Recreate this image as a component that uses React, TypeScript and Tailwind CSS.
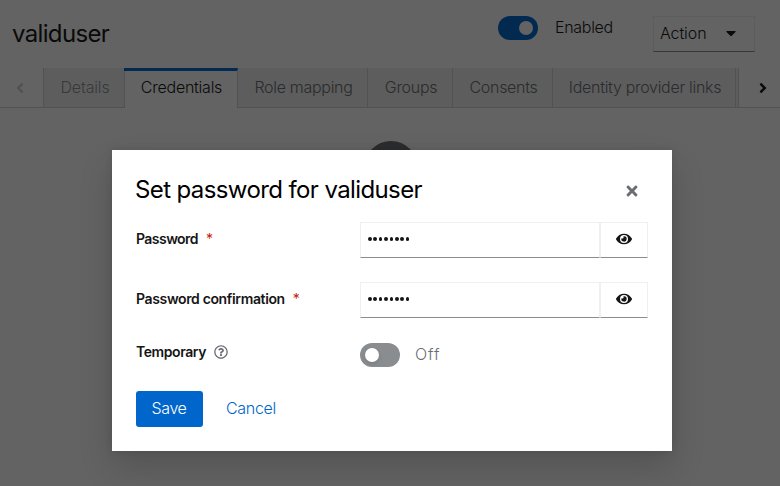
import React from 'react';
import { FaAngleLeft, FaAngleRight, FaCaretDown, FaEye, FaRegQuestionCircle, FaTimes } from 'react-icons/fa';

type Tab = { label: string; box: string; text: string; active?: boolean };

const tabs: Tab[] = [
  { label: 'Details', box: 'w-[81px]', text: 'tracking-[-0.15px] text-[#6a6e73]/75' },
  { label: 'Credentials', box: '-ml-px w-[114px]', text: 'tracking-[-0.25px] text-[#151515]', active: true },
  { label: 'Role mapping', box: 'w-[130px]', text: 'tracking-[-0.3px] text-[#6a6e73]' },
  { label: 'Groups', box: 'w-[85px]', text: 'tracking-[-0.3px] text-[#6a6e73]' },
  { label: 'Consents', box: 'w-[100px]', text: 'tracking-[-0.3px] text-[#6a6e73]' },
  { label: 'Identity provider links', box: 'w-[183px]', text: 'tracking-[-0.3px] text-[#6a6e73]' },
];

function TabItem({ label, box, text, active }: Tab) {
  return (
    <div
      className={`${box} flex h-10 shrink-0 items-center justify-center whitespace-nowrap border-r border-r-[#d2d2d2] pl-[2px] ${
        active ? 'border-t-[3px] border-t-[#0066cc] pb-[5px]' : 'border-b border-b-[#d2d2d2] bg-[#f0f0f0] pb-px'
      }`}
    >
      <span className={text}>{label}</span>
    </div>
  );
}

function Page() {
  return (
    <div className="h-[486px] w-[780px] overflow-hidden bg-white">
      <header className="flex h-[68px] items-start pl-3">
        <h1 className="w-[486px] pt-[17px] text-[24px] font-normal leading-[34px] tracking-[-0.65px]">validuser</h1>
        <div className="mt-4 flex h-6 w-10 justify-end rounded-full bg-[#0066cc] p-[5px]">
          <div className="size-[14px] rounded-full bg-white" />
        </div>
        <span className="ml-[17px] mt-[15px] w-[98px] leading-6 tracking-[-0.3px]">Enabled</span>
        <div className="mt-4 flex h-9 w-[102px] items-center border border-[#f0f0f0] border-b-[#8a8d90] pb-[2px] pl-[6px]">
          <span className="w-[63px] tracking-[-0.1px]">Action</span>
          <FaCaretDown className="size-4" />
        </div>
      </header>
      <nav className="flex h-10">
        <div className="flex w-11 shrink-0 items-center justify-center border-b border-r border-[#d2d2d2] pr-[3px]">
          <FaAngleLeft className="size-4 text-[#d2d2d2]" />
        </div>
        {tabs.map((tab) => (
          <TabItem key={tab.label} {...tab} />
        ))}
        <div className="w-[2px] shrink-0 border-b border-[#d2d2d2] bg-[#f0f0f0]" />
        <div className="flex flex-1 items-center justify-center border-b border-l border-[#d2d2d2] pl-[6px]">
          <FaAngleRight className="size-4" />
        </div>
      </nav>
      <div className="ml-[364px] mt-[33px] size-[54px] rounded-full bg-[#6a6e73]" />
    </div>
  );
}

function PasswordRow({ label, tracking }: { label: string; tracking: string }) {
  return (
    <div className="mb-6 flex h-9">
      <div className="flex w-[224px] pt-[6px] text-[14px] font-semibold leading-[21px]">
        <span className={tracking}>{label}</span>
        <span className="ml-2 font-normal text-[#c9190b]">*</span>
      </div>
      <div className="flex h-9 w-[240px] items-center gap-[1.7px] border border-[#f0f0f0] border-b-[#8a8d90] pb-[2px] pl-[7px]">
        {Array.from({ length: 8 }, (_, i) => (
          <i key={i} className="size-[3.7px] rounded-full bg-[#151515]" />
        ))}
      </div>
      <div className="flex h-9 w-12 items-center justify-center border border-[#f0f0f0] border-b-[#8a8d90] pb-[2px]">
        <FaEye className="size-4" />
      </div>
    </div>
  );
}

function PasswordDialog() {
  return (
    <section className="h-[301px] w-[560px] bg-white px-6 pt-6 shadow-[0_16px_32px_0_rgba(3,3,3,0.16),0_0_8px_0_rgba(3,3,3,0.1)]">
      <div className="flex h-12 justify-between">
        <h2 className="-ml-px whitespace-nowrap text-[24px] font-normal leading-[31px] tracking-[-0.61px] text-black">
          Set password for validuser
        </h2>
        <FaTimes className="mr-2 mt-[9px] size-4 text-[#6a6e73]" />
      </div>
      <PasswordRow label="Password" tracking="tracking-[-0.55px]" />
      <PasswordRow label="Password confirmation" tracking="tracking-[-0.36px]" />
      <div className="flex h-[49px]">
        <div className="-mt-px flex w-[224px] text-[14px] font-semibold leading-[21px]">
          <span className="tracking-[-0.42px]">Temporary</span>
          <FaRegQuestionCircle className="ml-2 mt-[4px] size-[14px] text-[#6a6e73]" />
        </div>
        <div className="mt-px flex h-6 w-10 items-center rounded-full bg-[#8a8d90] pl-[5px]">
          <div className="size-[14px] rounded-full bg-white shadow-[0_2px_4px_rgba(3,3,3,0.12)]" />
        </div>
        <span className="ml-[15px] leading-[25px] tracking-[0.9px] text-[#6a6e73]">Off</span>
      </div>
      <div className="flex h-9 items-center">
        <button className="h-9 w-[67px] rounded-[3px] bg-[#0066cc] pb-[2px] pr-px tracking-[-0.4px] text-white">Save</button>
        <button className="ml-[23px] pb-[2px] tracking-[-0.3px] text-[#0066cc]">Cancel</button>
      </div>
    </section>
  );
}

export default function App() {
  return (
    <main className="relative h-[486px] w-[780px] overflow-hidden font-['Inter','Liberation_Sans',sans-serif] text-[16px] font-light text-[#151515]">
      <Page />
      <div className="absolute inset-0 bg-[rgba(3,3,3,0.62)] pl-[112px] pt-[150px]">
        <PasswordDialog />
      </div>
    </main>
  );
}
